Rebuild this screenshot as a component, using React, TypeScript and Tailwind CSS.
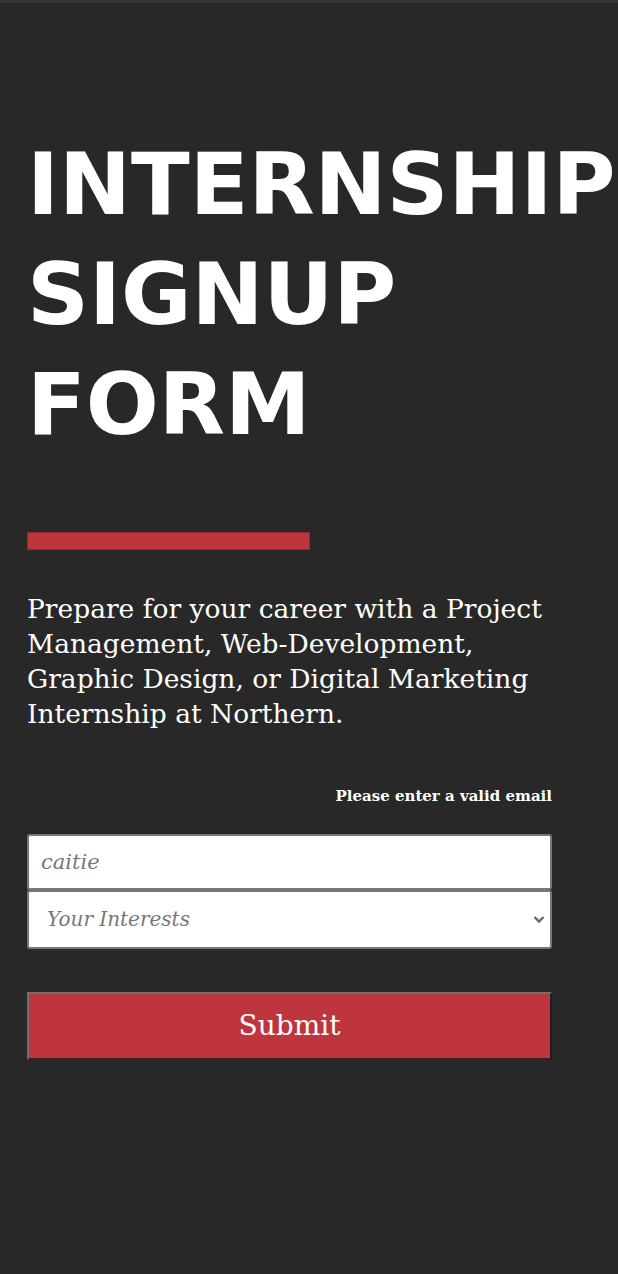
export default function App() {
  return (
    <div className="min-h-[1274px] bg-[#282828] border-t-[3px] border-[#353535]">
      <div className="pl-[27px] w-[552px]">
        <h1 className="pt-[126px] text-white font-bold uppercase text-[86px] leading-[110px] whitespace-nowrap" style={{ fontFamily: '"DejaVu Sans", sans-serif' }}>
          Internship
          <br />
          Signup
          <br />
          Form
        </h1>
        <div className="mt-[73px] h-[18px] w-[283px] bg-[#c0343c] border border-[#8f2a30]" />
        <p className="mt-[41px] text-white text-[26.5px] leading-[35px]" style={{ fontFamily: '"DejaVu Serif", serif' }}>
          Prepare for your career with a Project Management, Web-Development, Graphic Design, or Digital Marketing Internship at Northern.
        </p>
        <form className="mt-[54px]" style={{ fontFamily: '"DejaVu Serif", serif' }}>
          <div className="text-right text-white font-bold text-[15px]">Please enter a valid email</div>
          <input
            type="email"
            placeholder="caitie"
            className="mt-[26px] block w-full h-[56px] bg-white border-2 border-[#777] rounded-[3px] px-[12px] text-[21px] italic placeholder:text-[#777] outline-none"
          />
          <div className="relative">
            <select
              defaultValue=""
              className="block w-full h-[59px] bg-white border-2 border-[#777] rounded-[3px] pl-[18px] text-[20px] italic text-[#777] appearance-none outline-none"
            >
              <option value="" disabled>Your Interests</option>
              <option>Project Management</option>
              <option>Web-Development</option>
              <option>Graphic Design</option>
              <option>Digital Marketing</option>
            </select>
            <svg className="absolute right-[7px] top-[25px] w-[12px] h-[9px]" viewBox="0 0 12 9" fill="none" stroke="#666" strokeWidth="2.4">
              <path d="M1.5 2l4.5 4.5 4.5-4.5" />
            </svg>
          </div>
          <button
            type="button"
            className="mt-[43px] block w-full h-[68px] bg-[#bf353d] text-white text-[28px] border-[2px] border-t-[#6e6e6e] border-l-[#6e6e6e] border-r-[#1e1e1e] border-b-[#3a1f21]"
          >
            Submit
          </button>
        </form>
      </div>
    </div>
  )
}
